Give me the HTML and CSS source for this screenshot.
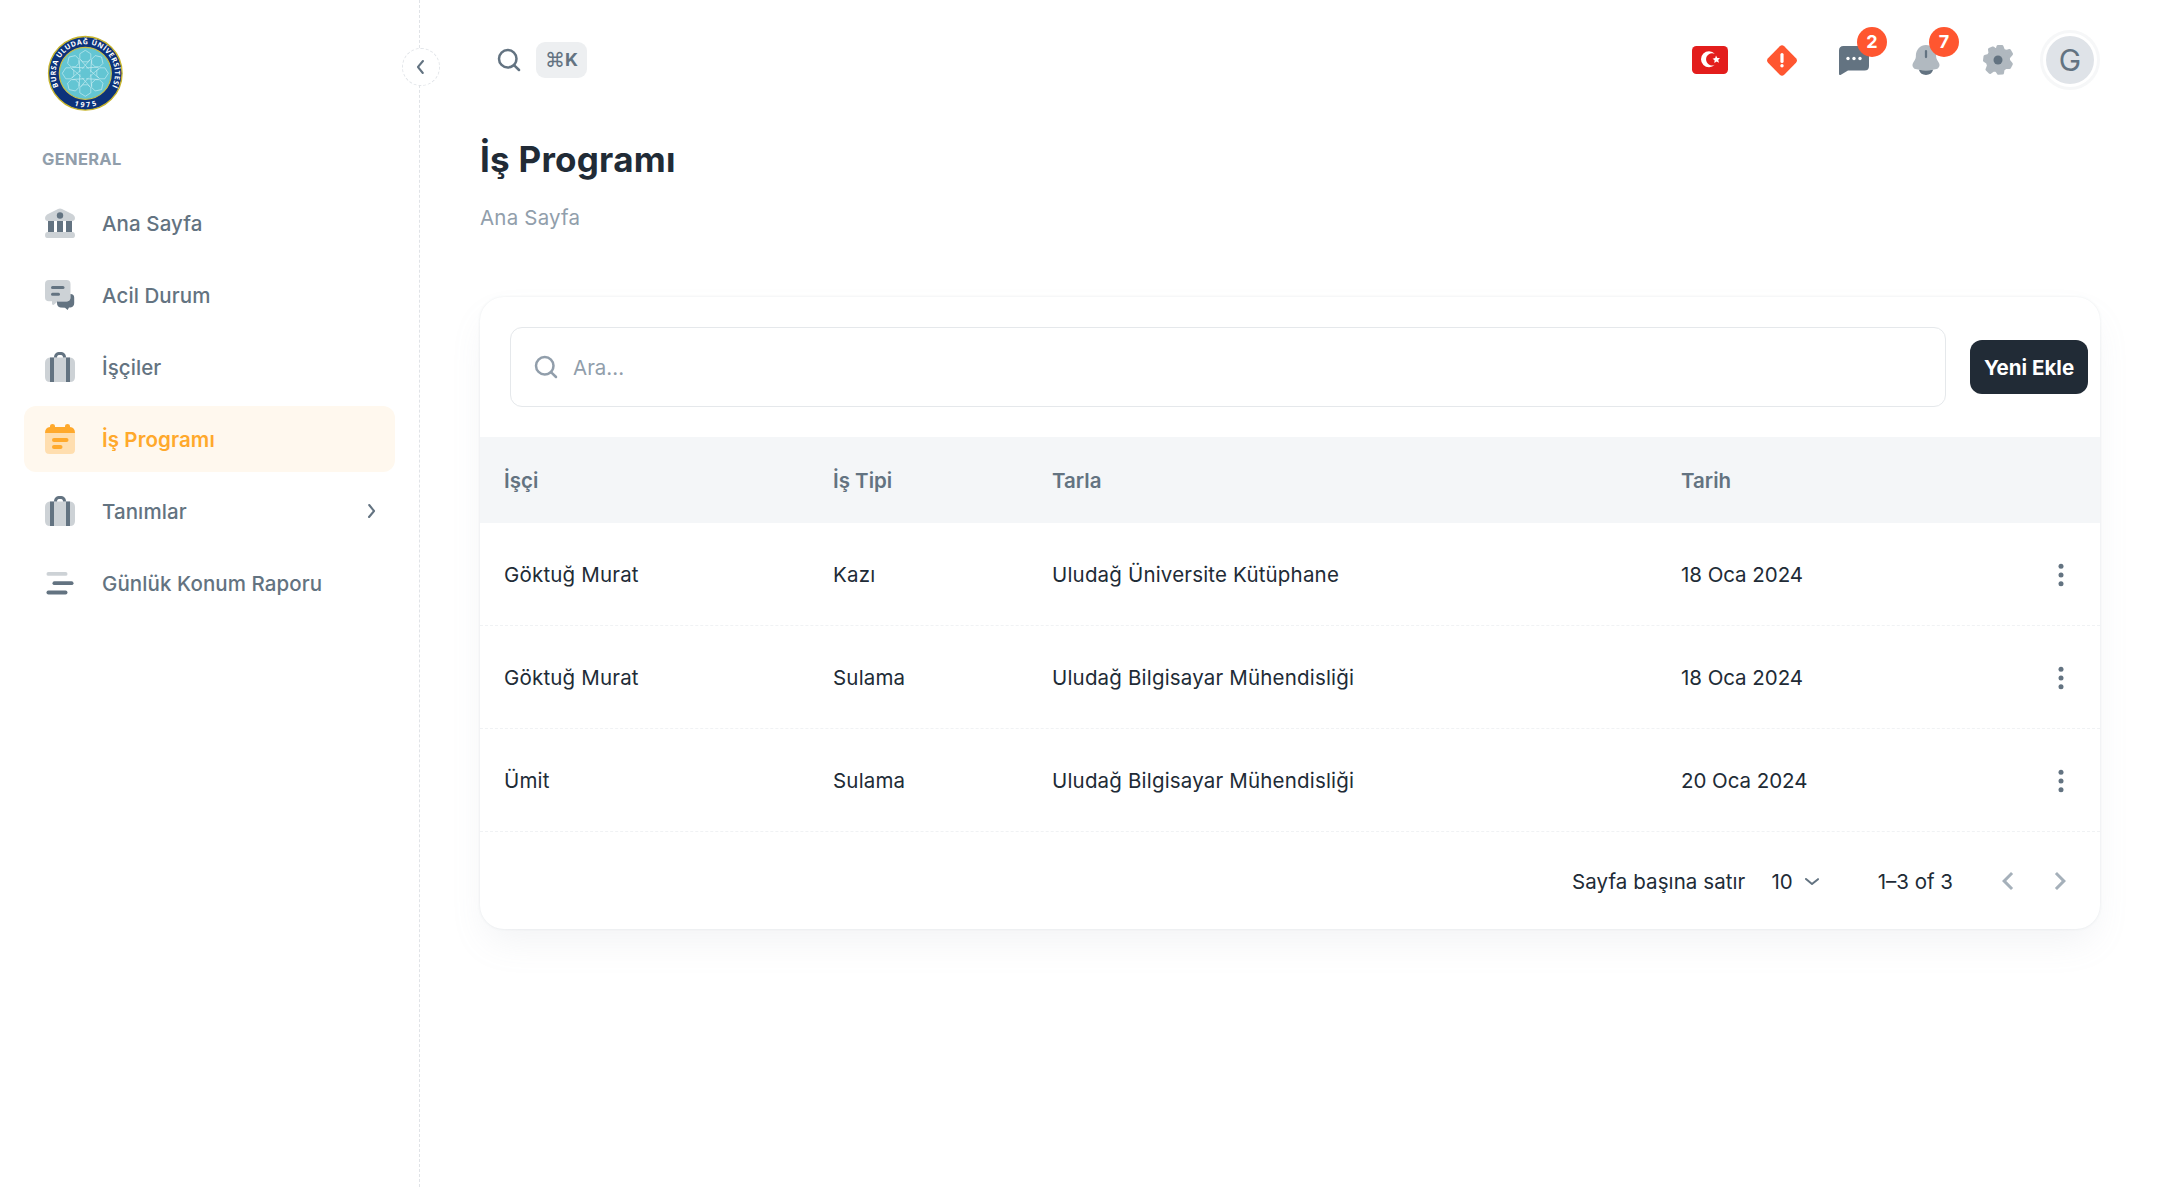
FILE: index.html
```html
<!DOCTYPE html>
<html lang="tr">
<head>
<meta charset="utf-8">
<title>İş Programı</title>
<link rel="stylesheet" href="styles.css">
</head>
<body>
<svg class="defs" width="0" height="0" aria-hidden="true">
  <defs>
    <symbol id="search" viewBox="0 0 24 24"><path d="M20.71 19.29l-3.4-3.39A7.92 7.92 0 0 0 19 11a8 8 0 1 0-8 8 7.92 7.92 0 0 0 4.9-1.69l3.39 3.4a1 1 0 0 0 1.42 0 1 1 0 0 0 0-1.42zM5 11a6 6 0 1 1 6 6 6 6 0 0 1-6-6z"/></symbol>
    <symbol id="suitcase" viewBox="0 0 30 30"><path opacity=".32" d="M5 5.500H25Q30 6 30 11V25Q30 30 25 30H5Q0 30 0 25V11Q0 6 5 5.500Z"/><path d="M5 5.500H9V30H5ZM21 5.500H25V30H21ZM9 5.500C9 2 11 0 15 0s6 2 6 5.500h-3C18 3.500 17 3 15 3s-3 .5-3 2.500Z"/></symbol>
    <symbol id="forward" viewBox="0 0 24 24"><path d="M10 19a1 1 0 0 1-.64-.23 1 1 0 0 1-.13-1.410L13.710 12 9.390 6.630a1 1 0 0 1 .15-1.410 1 1 0 0 1 1.460.15l4.830 6a1 1 0 0 1 0 1.270l-5 6A1 1 0 0 1 10 19z"/></symbol>
    <symbol id="more" viewBox="0 0 24 24"><circle cx="12" cy="5" r="2"/><circle cx="12" cy="12" r="2"/><circle cx="12" cy="19" r="2"/></symbol>
    <g id="petal" fill="none" stroke="#c3ebf0" stroke-width=".7"><path d="M79.800 53.500 85.300 50 90.800 53.500V58.500L87.800 61.500H82.800L79.800 58.500ZM80.500 59.500 88.500 68.500M90.100 59.500 82.100 68.500"/></g>
  </defs>
</svg>
<div class="app">
  <aside class="sidebar">
    <svg class="logo" viewBox="47 35 76 76">
      <defs>
        <path id="arc-top" d="M61.600 91.500A29.600 29.600 0 1 1 109 91.500"/>
        <path id="arc-bottom" d="M54.400 87.500A34 34 0 0 0 116.200 87.500"/>
      </defs>
      <circle cx="85.300" cy="73.300" r="36.800" fill="#0c327b" stroke="#c8b52c" stroke-width="1.300"/>
      <circle cx="85.300" cy="73.300" r="26" fill="#63c5d3" stroke="#c8c04a" stroke-width="1.200"/>
      <g transform="translate(0 .3)">
        <use href="#petal"/><use href="#petal" transform="rotate(45 85.300 73)"/><use href="#petal" transform="rotate(90 85.300 73)"/><use href="#petal" transform="rotate(135 85.300 73)"/><use href="#petal" transform="rotate(180 85.300 73)"/><use href="#petal" transform="rotate(225 85.300 73)"/><use href="#petal" transform="rotate(270 85.300 73)"/><use href="#petal" transform="rotate(315 85.300 73)"/>
      </g>
      <text class="logo-text"><textPath href="#arc-top" startOffset="50%" text-anchor="middle" textLength="119">BURSA ULUDAĞ ÜNİVERSİTESİ</textPath></text>
      <text class="logo-text"><textPath href="#arc-bottom" startOffset="50%" text-anchor="middle" textLength="23">1975</textPath></text>
    </svg>
    <h2 class="nav-heading">GENERAL</h2>
    <nav class="nav">
      <a class="nav-item">
        <svg class="nav-icon" viewBox="0 0 30 30"><path opacity=".32" d="M13 1Q15 0 17 1L28 6.500Q30 8 30 10Q30 13 27 13H3Q0 13 0 10Q0 8 2 6.500ZM2 24H28Q30 24.500 30 27Q30 30 28 30H2Q0 30 0 27Q0 24.500 2 24Z"/><circle cx="15" cy="7.500" r="3.200"/><path d="M3 13H9V24H3ZM12 13H18V24H12ZM21 13H27V24H21Z"/></svg>
        <span>Ana Sayfa</span></a>
      <a class="nav-item">
        <svg class="nav-icon" viewBox="0 0 30 30"><path d="M25.500 14Q29.200 14 29.200 17.500V23Q29.200 27 25.500 27.400H24L22.600 30 20 27.800 15.500 27.400Q12 27 12 23V21.500H22Q25.500 21 25.500 17.500Z"/><path opacity=".32" d="M4 0H21.500Q25.500 0 25.500 4V17.500Q25.500 21.300 21.500 21.300H13L8.500 25Q7 25 7 23.500V21.300H4Q0 21.300 0 17.500V4Q0 0 4 0Z"/><rect x="6" y="6" width="13.500" height="3" rx="1.500"/><rect x="6" y="12.700" width="9" height="3" rx="1.500"/></svg>
        <span>Acil Durum</span></a>
      <a class="nav-item"><svg class="nav-icon"><use href="#suitcase"/></svg><span>İşçiler</span></a>
      <a class="nav-item active">
        <svg class="nav-icon" viewBox="0 0 30 30"><path opacity=".32" d="M0 9H30V25.500Q30 30 25.500 30H4.500Q0 30 0 25.500Z"/><path d="M0 9Q0 3.500 5 3V2Q5 0 7.500 0T10 2V3H20V2Q20 0 22.500 0T25 2V3Q30 3.500 30 9Z"/><rect x="7" y="14" width="16.500" height="4" rx="2"/><rect x="7" y="21" width="10.500" height="4" rx="2"/></svg>
        <span>İş Programı</span></a>
      <a class="nav-item"><svg class="nav-icon"><use href="#suitcase"/></svg><span>Tanımlar</span><svg class="nav-arrow"><use href="#forward"/></svg></a>
      <a class="nav-item">
        <svg class="nav-icon" viewBox="0 0 30 30"><rect opacity=".32" x="1.500" y="4" width="21" height="3.800" rx="1.900"/><rect x="7.500" y="13.300" width="21" height="3.800" rx="1.900"/><rect x="1.500" y="22.600" width="21" height="3.800" rx="1.900"/></svg>
        <span>Günlük Konum Raporu</span></a>
    </nav>
    <button class="collapse"><svg><use href="#forward"/></svg></button>
  </aside>
  <main class="main">
    <header class="topbar">
      <svg class="search-icon"><use href="#search"/></svg>
      <kbd class="shortcut"><span class="cmd">⌘</span><span>K</span></kbd>
      <div class="tools">
        <svg class="flag" viewBox="0 0 36 28"><rect width="36" height="28" rx="4.500" fill="#e31d1c"/><path fill="#fff" d="M22.800 7.800A8 8 0 1 0 22.800 18.800 6.100 6.100 0 1 1 22.800 7.800Z"/><path fill="#fff" d="M24 9.500 25.300 11.900 28 12.100 26.200 14.100 27 16.700 24.600 15.500 22.300 17 22.600 14.300 20.600 12.700 23.200 12.100Z"/></svg>
        <svg class="tool alert" viewBox="0 0 30 31"><path d="M12.800 1.200Q15 -.8 17.200 1.200L29 13.200Q31 15.500 29 17.700L17.200 29.800Q15 31.800 12.800 29.800L1 17.700Q-1 15.500 1 13.200Z"/><path d="M15 9.500v7" stroke="#fff" stroke-width="3.200" stroke-linecap="round"/><circle cx="15" cy="20.700" r="1.700" fill="#fff"/></svg>
        <div class="badge-wrap"><svg class="tool" viewBox="0 0 30 30"><path d="M4.500 1H25.500Q30 1 30 5.500V21Q30 25.500 25.500 25.500H9L1.500 30Q0 30.500 0 28.500V5.500Q0 1 4.500 1Z"/><g fill="#fff"><circle cx="9" cy="13.500" r="1.700"/><circle cx="15" cy="13.500" r="1.700"/><circle cx="21" cy="13.500" r="1.700"/></g></svg><span class="badge">2</span></div>
        <div class="badge-wrap bell-wrap"><svg class="tool bell" viewBox="0 0 24 24"><path opacity=".5" d="M18.750 9v.704c0 .845.24 1.671.692 2.374l1.108 1.723c1.011 1.574.239 3.713-1.520 4.210a25.800 25.800 0 0 1-14.060 0c-1.759-.497-2.531-2.636-1.520-4.210l1.108-1.723a4.400 4.400 0 0 0 .693-2.374V9c0-3.866 3.022-7 6.749-7s6.750 3.134 6.750 7"/><path d="M12.750 6a.75.75 0 0 0-1.500 0v4a.75.75 0 0 0 1.500 0zM7.243 18.545a5.002 5.002 0 0 0 9.513 0c-3.145.59-6.367.59-9.513 0"/></svg><span class="badge">7</span></div>
        <svg class="tool gear" viewBox="-15 -15 30 30"><path opacity=".5" stroke="currentColor" stroke-width="3" stroke-linejoin="round" d="M-.8-10.500 0-13.500H4L5.500-9.500 8.500-8.500 11.500-9.500 13.500-6 10.500-2.500V.5L13.300 4 11.500 7.500 7.500 7.500 5 9.500 4.500 13 .5 13.300-1.500 10.500-4.500 10-8 12.500-11 9.500-9.500 5.500-10.500 2.500-13.500.5-13-3.500-9.500-4.500-8-7-8.500-10.500-5-12-2.500-10Z"/><circle r="4.500"/></svg>
        <div class="avatar"><span>G</span></div>
      </div>
    </header>
    <h1 class="title">İş Programı</h1>
    <p class="crumb">Ana Sayfa</p>
    <section class="card">
      <div class="toolbar">
        <div class="field"><svg><use href="#search"/></svg><span>Ara...</span></div>
        <button class="add">Yeni Ekle</button>
      </div>
      <div class="row head"><span>İşçi</span><span>İş Tipi</span><span>Tarla</span><span>Tarih</span></div>
      <div class="row"><span>Göktuğ Murat</span><span>Kazı</span><span>Uludağ Üniversite Kütüphane</span><span class="date">18 Oca 2024</span><svg><use href="#more"/></svg></div>
      <div class="row"><span>Göktuğ Murat</span><span>Sulama</span><span>Uludağ Bilgisayar Mühendisliği</span><span class="date">18 Oca 2024</span><svg><use href="#more"/></svg></div>
      <div class="row"><span>Ümit</span><span>Sulama</span><span>Uludağ Bilgisayar Mühendisliği</span><span class="date">20 Oca 2024</span><svg><use href="#more"/></svg></div>
      <footer class="pager">
        <span class="per-page">Sayfa başına satır</span>
        <span class="count">10</span>
        <svg class="caret"><use href="#forward"/></svg>
        <span class="range">1–3 of 3</span>
        <svg class="page-arrow" viewBox="0 0 24 24"><path d="M15.410 16.590 10.830 12 15.410 7.410 14 6l-6 6 6 6z"/></svg>
        <svg class="page-arrow" viewBox="0 0 24 24"><path d="M8.590 16.590 13.170 12 8.590 7.410 10 6l6 6-6 6z"/></svg>
      </footer>
    </section>
  </main>
</div>
</body>
</html>
```
FILE: styles.css
```css
* { box-sizing: border-box; }
body { margin: 0; background: #fff; color: #212b36; font: 400 20.5px/33px Inter, "Liberation Sans", sans-serif; }
.defs { position: absolute; }
svg { display: block; fill: currentColor; flex: none; }
button { border: 0; padding: 0; font: inherit; }
.app { display: flex; height: 1187px; overflow: hidden; }
.sidebar { position: relative; width: 420px; flex: none; padding: 35px 24px 0; border-right: 1px dashed #e0e3e7; }
.logo { width: 76px; height: 76px; margin-left: 23px; }
.logo-text { font: 700 7.200px "Open Sans", sans-serif; fill: #fff; }
.nav-heading { margin: 32px 0 14px 18px; font-size: 16.500px; line-height: 33px; font-weight: 700; letter-spacing: .3px; color: #919eab; }
.nav { display: flex; flex-direction: column; gap: 6px; }
.nav-item { display: flex; align-items: center; height: 66px; padding: 0 21px; border-radius: 12px; color: #637381; font-weight: 500; letter-spacing: .09px; }
.nav-item.active { color: #ffa92c; background: #fff8ee; font-weight: 600; }
.nav-icon { width: 30px; height: 30px; margin-right: 27px; }
.nav-arrow { width: 24px; height: 24px; margin-left: auto; margin-right: -9px; }
.collapse { position: absolute; left: 402px; top: 48px; width: 38px; height: 38px; border: 1px dashed #e2e5e9; border-radius: 50%; background: #fff; color: #637381; display: grid; place-items: center; }
.collapse svg { width: 24px; height: 24px; transform: rotate(180deg); }
.main { flex: 1; min-width: 0; padding: 0 60px; }
.topbar { display: flex; align-items: center; height: 120px; padding-left: 14px; color: #637381; }
.search-icon { width: 30px; height: 30px; margin-right: 12px; }
.shortcut { display: flex; align-items: center; justify-content: center; width: 51px; height: 36px; border-radius: 9px; background: #edeff1; font: 700 18px/36px Inter, sans-serif; }
.cmd { font: 400 20px/36px "DejaVu Sans", sans-serif; }
.tools { display: flex; align-items: center; margin-left: auto; }
.flag { width: 36px; height: 28px; margin-right: 39px; }
.tool { width: 30px; height: 30px; margin-right: 42px; }
.alert { color: #ff5630; height: 31px; }
.badge-wrap { position: relative; }
.tool.bell { width: 36px; height: 36px; margin: 0 39px 0 -3px; }
.badge { position: absolute; top: -18px; left: 18px; width: 30px; height: 30px; border-radius: 50%; background: #ff5630; color: #fff; font: 700 18px/30px Inter, sans-serif; text-align: center; }
.bell-wrap .badge { top: -15px; }
.avatar { width: 60px; height: 60px; margin-left: -15px; padding: 3px; border: 3px solid #f6f7f8; border-radius: 50%; }
.avatar span { display: block; width: 48px; height: 48px; border-radius: 50%; background: #dfe3e8; font-size: 30px; line-height: 48px; text-align: center; }
.title { margin: 12px 0 0; font-size: 35px; line-height: 54px; font-weight: 700; letter-spacing: .25px; }
.crumb { margin: 15px 0 63px; color: #919eab; letter-spacing: .2px; }
.card { height: 632px; border-radius: 24px; background: #fff; box-shadow: 0 0 3px rgba(145,158,171,.2), 0 18px 36px -6px rgba(145,158,171,.12); }
.toolbar { display: flex; align-items: center; height: 140px; padding: 0 12px 0 30px; gap: 24px; }
.field { display: flex; align-items: center; flex: 1; height: 80px; padding-left: 20px; border: 1px solid #e5e8eb; border-radius: 12px; color: #919eab; }
.field svg { width: 30px; height: 30px; margin-right: 12px; }
.add { width: 118px; height: 54px; border-radius: 12px; background: #212b36; color: #fff; font-weight: 700; }
.row { display: grid; grid-template-columns: 329px 219px 629px 1fr 30px; align-items: center; height: 103px; padding: 1px 24px 0; border-bottom: 1px dashed #f0f2f4; letter-spacing: .18px; }
.row svg { width: 30px; height: 30px; color: #637381; }
.date { letter-spacing: -.05px; }
.head { height: 86px; padding-top: 0; border: 0; background: #f4f6f8; color: #637381; font-weight: 600; letter-spacing: 0; }
.pager { display: flex; align-items: center; justify-content: flex-end; height: 97px; padding: 1px 22px 0 0; }
.per-page { letter-spacing: .08px; }
.count { margin-left: 26px; }
.caret { width: 24px; height: 24px; margin-left: 7px; transform: rotate(90deg); color: #637381; }
.range { margin: 0 37px 0 54px; }
.page-arrow { width: 36px; height: 36px; color: #a5b0ba; }
.page-arrow + .page-arrow { margin-left: 16px; }
```
